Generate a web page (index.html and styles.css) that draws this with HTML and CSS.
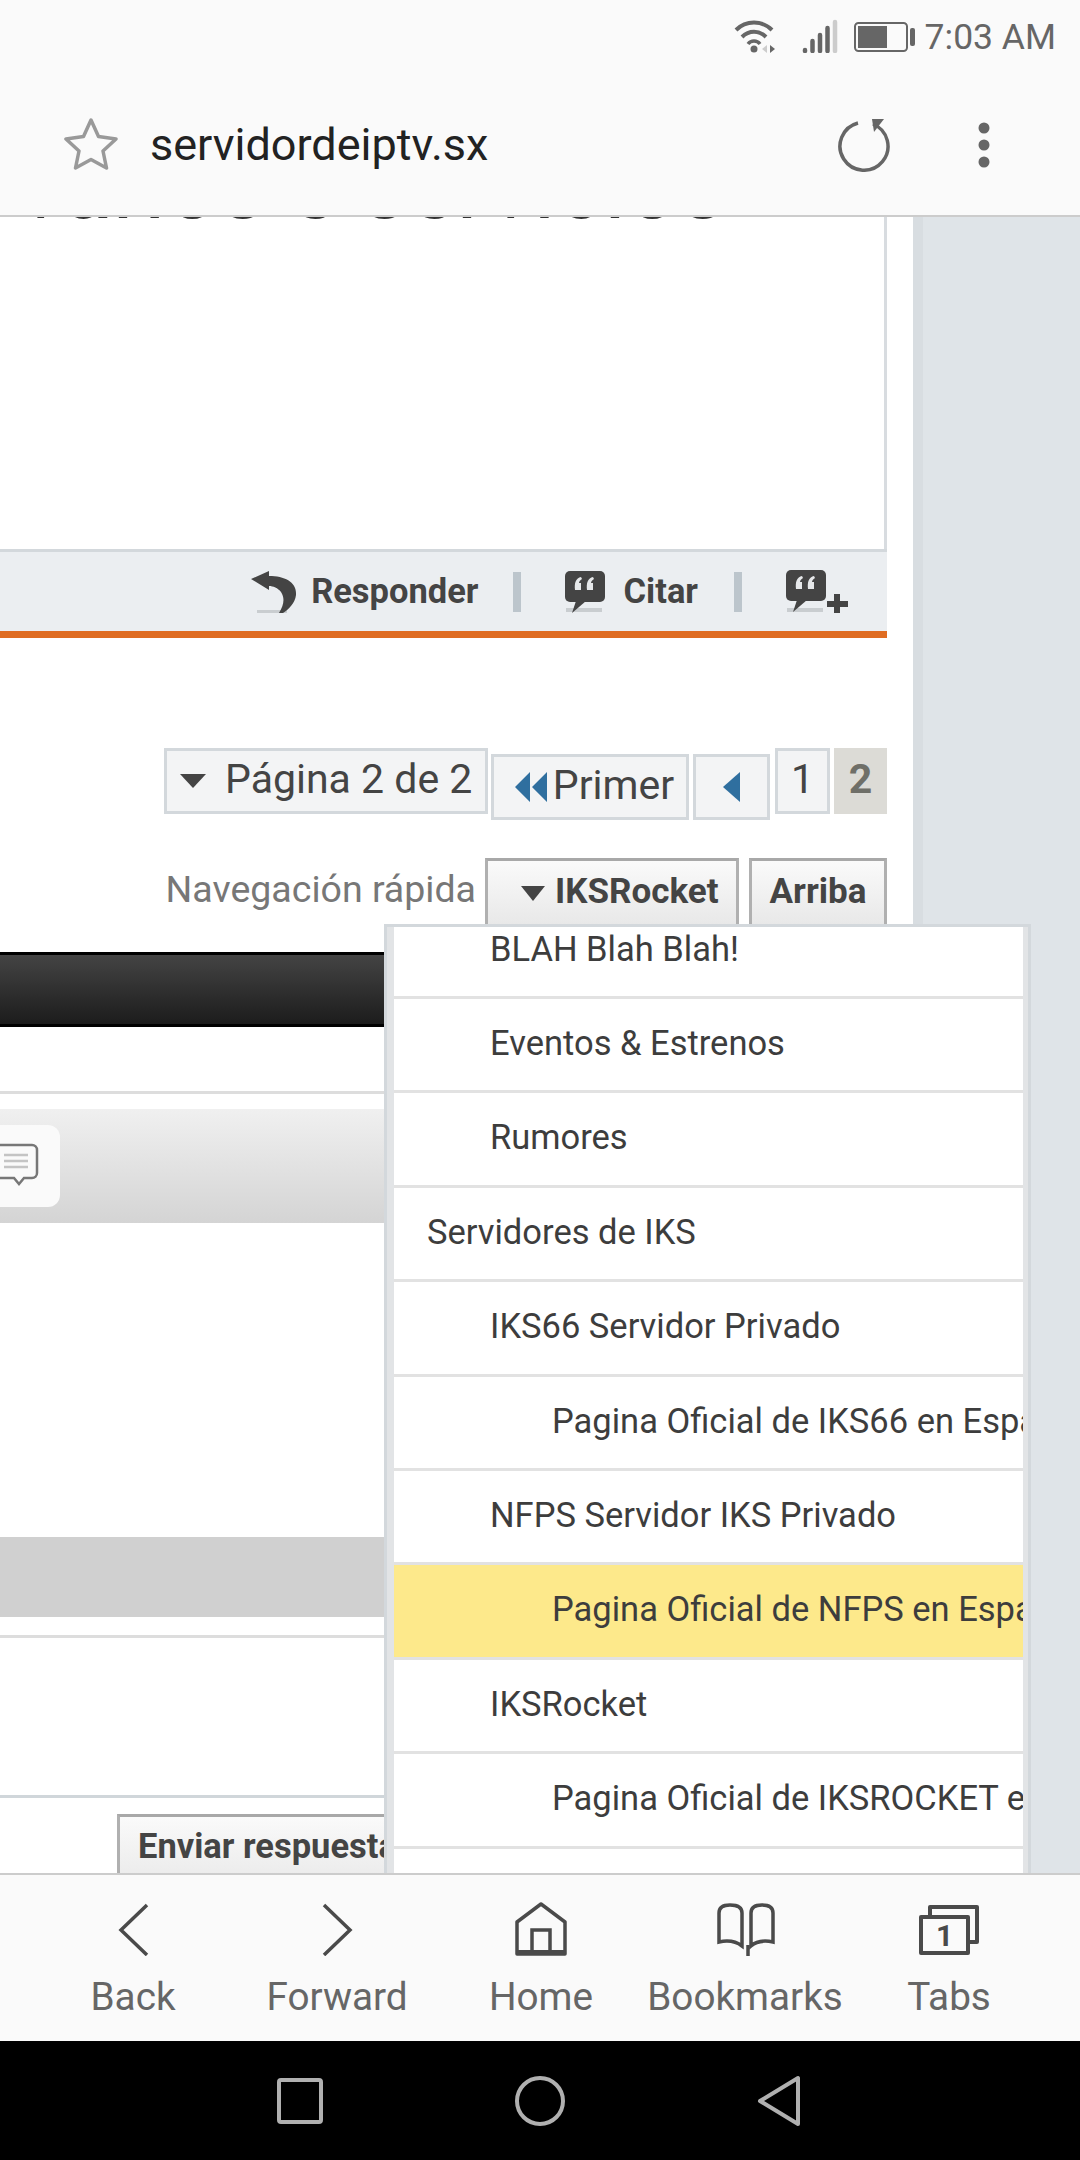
FILE: index.html
```html
<!DOCTYPE html>
<html lang="es">
<head>
<meta charset="utf-8">
<title>servidordeiptv.sx</title>
<link rel="stylesheet" href="styles.css">
</head>
<body>
<div class="app">
  <header class="chrome">
    <div class="status">
      <svg class="st-wifi" width="42" height="34" viewBox="0 0 42 34"><g fill="none" stroke="#666" stroke-width="4"><path d="M2 11C12 1 28 1 38 11"/><path d="M8 18C15 11 25 11 32 18"/></g><path d="M14 25C17 21 23 21 26 25" fill="none" stroke="#666" stroke-width="3.500"/><circle cx="20" cy="30" r="3.500" fill="#666"/><path d="M33 26l-5 4 5 4z" fill="#ccc"/><path d="M36 26l5 4-5 4z" fill="#666"/></svg>
      <svg class="st-signal" width="36" height="34" viewBox="0 0 36 34"><g fill="none" stroke-width="4.500" stroke-linecap="round"><path d="M3 31v1M10.500 22v10M18 16v16M25.500 9v23" stroke="#666"/><path d="M33 3v29" stroke="#ccc"/></g></svg>
      <svg class="st-batt" width="62" height="30" viewBox="0 0 62 30"><rect x="1" y="1" width="52" height="28" rx="3.500" fill="none" stroke="#666" stroke-width="2"/><rect x="4" y="4" width="29" height="22" fill="#666"/><rect x="56" y="6" width="5" height="18" rx="2" fill="#666"/></svg>
      <span class="st-time">7:03 AM</span>
    </div>
    <div class="urlbar">
      <svg class="star" width="54" height="54" viewBox="0 0 54 54"><path d="M27 3l7.500 16.500L52 22 39 34l3.500 17L27 42.500 11.500 51 15 34 2 22l17.500-2.500z" fill="none" stroke="#999" stroke-width="3.500" stroke-linejoin="round"/></svg>
      <span class="url">servidordeiptv.sx</span>
      <svg class="reload" width="54" height="54" viewBox="0 0 54 54"><path d="M20 5A24 24 0 1 0 35 6" fill="none" stroke="#666" stroke-width="3.500"/><path d="M34 1h12l-10 13z" fill="#666"/></svg>
      <svg class="dots" width="12" height="46" viewBox="0 0 12 46"><circle cx="6" cy="6" r="5.500" fill="#666"/><circle cx="6" cy="23" r="5.500" fill="#666"/><circle cx="6" cy="40" r="5.500" fill="#666"/></svg>
    </div>
  </header>

  <main class="viewport">
    <div class="page">
      <section class="card">
        <div class="post-title"><span>varios e servicios</span></div>
        <div class="postbar">
          <svg class="act-icon" width="46" height="42" viewBox="0 0 46 42"><path d="M6 39h30v3H6z" fill="#c9cdd0"/><path d="M0 8L18 0v5c16 0 28 6 27 19-1 8-7 14-13 18h-4c5-8 6-15 2-21-3-4-8-6-12-6v4z" fill="#444"/></svg>
          <span class="act-text">Responder</span>
          <i class="act-sep act-sep-first"></i>
          <svg class="act-icon" width="42" height="42" viewBox="0 0 42 42"><path d="M2 37h36v4H2z" fill="#c9cdd0"/><rect x="1" y="0" width="40" height="31" rx="5" fill="#444"/><path d="M12 30h10L8 42z" fill="#444"/><path d="M17 6c-5 1-7 6-6 13h6v-7h-2c0-1 1-3 3-4zM29 6c-5 1-7 6-6 13h6v-7h-2c0-1 1-3 3-4z" fill="#e6e8ea"/></svg>
          <span class="act-text act-citar">Citar</span>
          <i class="act-sep"></i>
          <svg class="act-icon" width="63" height="43" viewBox="0 0 63 43"><path d="M2 38h36v4H2z" fill="#c9cdd0"/><rect x="1" y="0" width="40" height="31" rx="5" fill="#444"/><path d="M12 30h10L8 42z" fill="#444"/><path d="M17 6c-5 1-7 6-6 13h6v-7h-2c0-1 1-3 3-4zM29 6c-5 1-7 6-6 13h6v-7h-2c0-1 1-3 3-4z" fill="#e6e8ea"/><path d="M49 24h6v7h8v6h-8v6h-6v-6h-7v-6h7z" fill="#444"/></svg>
        </div>
      </section>

      <nav class="pager">
        <div class="pg pg-main">
          <svg class="tri" width="26" height="14" viewBox="0 0 26 14"><path d="M0 0h26L13 14z" fill="#444"/></svg>
          <span>Página 2 de 2</span>
        </div>
        <div class="pg pg-low pg-first">
          <svg width="32" height="30" viewBox="0 0 32 30"><path d="M15 0v30L0 15zM32 0v30L17 15z" fill="#2f6f9f"/></svg>
          <span>Primer</span>
        </div>
        <div class="pg pg-low pg-prev">
          <svg width="17" height="30" viewBox="0 0 17 30"><path d="M17 0v30L0 15z" fill="#2f6f9f"/></svg>
        </div>
        <div class="pg pg-num">1</div>
        <div class="pg pg-num pg-cur">2</div>
      </nav>

      <div class="quicknav">
        <span class="qn-label">Navegación rápida</span>
        <button class="btn btn-forum" type="button">
          <svg class="tri" width="24" height="15" viewBox="0 0 24 15"><path d="M0 0h24L12 15z" fill="#444"/></svg>
          IKSRocket
        </button>
        <button class="btn btn-top" type="button">Arriba</button>
      </div>

      <div class="darkbar"></div>
      <div class="rule rule-a"></div>
      <div class="band">
        <div class="band-btn">
          <svg width="40" height="44" viewBox="0 0 40 44"><path d="M-6 2h38a5 5 0 0 1 5 5v23a5 5 0 0 1-5 5h-8l-5 6-5-6H-6z" fill="none" stroke="#777" stroke-width="2.500"/><path d="M4 12h24M4 18h24M4 24h24" stroke="#c4c4c4" stroke-width="2.500"/></svg>
        </div>
      </div>
      <div class="greyband"></div>
      <div class="rule rule-b"></div>
      <div class="rule rule-c"></div>
      <button class="btn btn-send" type="button">Enviar respuesta rápida</button>
    </div>

    <div class="popup">
      <ul class="menu">
        <li class="lv1">BLAH Blah Blah!</li>
        <li class="lv1">Eventos &amp; Estrenos</li>
        <li class="lv1">Rumores</li>
        <li class="lv0">Servidores de IKS</li>
        <li class="lv1">IKS66 Servidor Privado</li>
        <li class="lv2">Pagina Oficial de IKS66 en Español</li>
        <li class="lv1">NFPS Servidor IKS Privado</li>
        <li class="lv2 sel">Pagina Oficial de NFPS en Español</li>
        <li class="lv1">IKSRocket</li>
        <li class="lv2">Pagina Oficial de IKSROCKET en Español</li>
        <li class="lv1"></li>
      </ul>
    </div>
  </main>

  <footer class="toolbar">
    <div class="tool">
      <svg width="60" height="54" viewBox="0 0 60 54"><path d="M44 3L18 28l26 25" fill="none" stroke="#4a4a4a" stroke-width="3.500"/></svg>
      <span>Back</span>
    </div>
    <div class="tool">
      <svg width="60" height="54" viewBox="0 0 60 54"><path d="M17 3l26 25-26 25" fill="none" stroke="#4a4a4a" stroke-width="3.500"/></svg>
      <span>Forward</span>
    </div>
    <div class="tool">
      <svg width="60" height="54" viewBox="0 0 60 54"><path d="M6 20L30 2l24 18v32H6z" fill="none" stroke="#4a4a4a" stroke-width="3.500" stroke-linejoin="round"/><path d="M21 50V28h18v22" fill="none" stroke="#4a4a4a" stroke-width="3.500"/><path d="M6 50h48" stroke="#4a4a4a" stroke-width="4"/></svg>
      <span>Home</span>
    </div>
    <div class="tool">
      <svg width="60" height="54" viewBox="0 0 60 54"><g fill="none" stroke="#4a4a4a" stroke-width="3.500"><path d="M4 40V11Q4 3 15 3Q27 3 27 11V44Q18 37 4 40Z"/><path d="M36 11Q36 3 47 3Q58 3 58 11V40Q44 37 36 44Z"/><path d="M33 43v11"/></g></svg>
      <span>Bookmarks</span>
    </div>
    <div class="tool">
      <svg width="60" height="54" viewBox="0 0 60 54"><g fill="none" stroke="#4a4a4a" stroke-width="4" stroke-linejoin="round"><path d="M11 13V5h47v35H50"/><rect x="2" y="15" width="47" height="36"/></g><text class="tab-num" x="25.500" y="44" text-anchor="middle">1</text></svg>
      <span>Tabs</span>
    </div>
  </footer>

  <div class="navbar">
    <svg width="46" height="46" viewBox="0 0 46 46"><rect x="2" y="2" width="42" height="42" rx="2" fill="none" stroke="#b0b0b0" stroke-width="4"/></svg>
    <svg width="50" height="50" viewBox="0 0 50 50"><circle cx="25" cy="25" r="23" fill="none" stroke="#b0b0b0" stroke-width="4"/></svg>
    <svg width="44" height="52" viewBox="0 0 44 52"><path d="M41 3v46L3 26z" fill="none" stroke="#b0b0b0" stroke-width="4" stroke-linejoin="round"/></svg>
  </div>
</div>
</body>
</html>
```
FILE: styles.css
```css
* { box-sizing: border-box; }
html, body { margin: 0; padding: 0; }
body { font-family: Roboto, "Liberation Sans", sans-serif; color: #444; background: #fff; }
.app { width: 1080px; height: 2160px; display: flex; flex-direction: column; overflow: hidden; }

/* browser chrome */
.chrome { height: 217px; flex: none; background: #fafafa; border-bottom: 2px solid #ccc; }
.status { height: 70px; display: flex; align-items: flex-start; padding: 19px 24px 0 0; justify-content: flex-end; }
.st-wifi { margin-right: 26px; }
.st-signal { margin-right: 16px; }
.st-batt { margin: 3px 9px 0 0; }
.st-time { font-size: 35.500px; line-height: 36px; color: #666; margin-top: 0; }
.urlbar { height: 145px; display: flex; align-items: flex-start; padding: 47px 0 0 64px; position: relative; }
.url { font-size: 45px; line-height: 56px; color: #222; margin-left: 32px; flex: 1; }
.reload { margin: 1px 86px 0 0; }
.dots { margin: 5px 90px 0 0; }

/* page */
.viewport { flex: 1; min-height: 0; position: relative; overflow: hidden; background: #dfe4e8; }
.page { width: 923px; height: 100%; background: #fff; border-right: 10px solid #d8dde1; overflow: hidden; }
.card { width: 887px; height: 421px; border-right: 3px solid #d8dce0; display: flex; flex-direction: column; justify-content: space-between; }
.post-title { height: 4px; overflow: hidden; position: relative; }
.post-title span { position: absolute; right: 158px; bottom: -16px; line-height: 100px; height: 100px; font-size: 92px; color: #333; white-space: nowrap; }
.postbar { height: 89px; margin-right: -3px; background: #ebeef1; border-top: 3px solid #d3d8dc; border-bottom: 7px solid #df6c22; display: flex; align-items: center; justify-content: flex-end; padding-right: 39px; }
.act-text { font-size: 34.500px; line-height: 40px; font-weight: 700; color: #444; margin: -2px 0 0 14px; }
.act-citar { margin-left: 18px; }
.act-sep { width: 8px; height: 40px; background: #bcc5cc; margin: 0 43px 0 36px; }
.act-sep-first { margin-left: 34px; }

.pager { width: 887px; margin-top: 110px; display: flex; justify-content: flex-end; align-items: flex-start; font-size: 41px; color: #444; }
.pg { height: 66px; background: #f3f4f5; border: 3px solid #d3d8dc; display: flex; align-items: center; justify-content: center; margin-left: 4px; padding-bottom: 5px; }
.pg-main { width: 324px; margin-left: 0; justify-content: flex-start; padding-left: 13px; margin-right: 3px; }
.pg-main .tri { margin-right: 19px; margin-top: 5px; }
.pg-low { margin-top: 6px; }
.pg-first { width: 198px; margin-left: 0; padding-left: 9px; }
.pg-first svg { margin-right: 6px; margin-top: 5px; }
.pg-prev { width: 77px; }
.pg-prev svg { margin-top: 5px; }
.pg-num { width: 55px; margin-left: 5px; }
.pg-cur { width: 53px; margin-left: 4px; background: #dcdbd6; border-color: #dcdbd6; font-weight: 700; color: #6f6f68; }

.quicknav { width: 887px; margin-top: 38px; display: flex; justify-content: flex-end; align-items: flex-start; }
.qn-label { font-size: 37.500px; line-height: 62px; color: #777; margin-right: 9px; }
.btn { font: 700 35px Roboto, "Liberation Sans", sans-serif; color: #444; background: linear-gradient(#fafafa, #e8e8e8); border: 3px solid #b0b0b0; border-top-color: #a8a8a8; display: flex; align-items: center; padding: 0 0 4px; }
.btn-forum { width: 254px; height: 70px; justify-content: flex-start; gap: 10px; padding-left: 33px; }
.btn-forum .tri { margin-top: 4px; }
.btn-top { width: 138px; height: 70px; margin-left: 10px; justify-content: center; }

.darkbar { width: 887px; height: 75px; margin-top: 24px; border-top: 3px solid #000; border-bottom: 3px solid #000; background: linear-gradient(#444, #1c1c1c); }
.rule { width: 887px; height: 3px; background: #ddd; }
.rule-a { margin-top: 64px; }
.band { width: 887px; height: 114px; margin-top: 15px; padding-top: 16px; background: linear-gradient(#f0f0f0, #d4d4d4); }
.band-btn { width: 60px; height: 82px; background: #fafafa; border-radius: 0 12px 12px 0; padding-top: 18px; }
.band-btn svg { display: block; }
.greyband { width: 887px; height: 80px; margin-top: 314px; background: #d0d0d0; }
.rule-b { margin-top: 18px; }
.rule-c { margin-top: 157px; background: #d0d6da; }
.btn-send { width: 400px; height: 80px; margin: 16px 0 0 117px; padding: 0 0 16px 18px; white-space: nowrap; justify-content: flex-start; font-size: 34.500px; }

/* dropdown overlay */
.popup { position: absolute; left: 384px; top: 707px; width: 647px; bottom: 0; border: 3px solid #d3d8dc; border-bottom: 0; overflow: hidden; background: #fff; }
.menu { list-style: none; margin: -22.4px 0 0; padding: 0; border-left: 7px solid #e2e4e6; border-right: 5px solid #e2e4e6; }
.menu li { height: 94.4px; border-bottom: 3px solid #e2e2e2; font-size: 34.500px; line-height: 89.500px; color: #3d3d3d; white-space: nowrap; overflow: hidden; }
.lv0 { padding-left: 33px; }
.lv1 { padding-left: 96px; }
.lv2 { padding-left: 158px; }
.menu .sel { background: #fde98b; }

/* toolbar */
.toolbar { height: 168px; flex: none; background: #fafafa; border-top: 2px solid #ccc; display: grid; grid-template-columns: repeat(5, 204px); padding: 27px 0 0 31px; }
.tool { display: flex; flex-direction: column; align-items: center; gap: 19px; font-size: 38.700px; line-height: 44px; color: #666; }
.tool svg { display: block; }
.tab-num { font: 700 30px Roboto, sans-serif; fill: #4a4a4a; }

.navbar { height: 119px; flex: none; background: #000; display: flex; align-items: center; padding-left: 277px; }
.navbar svg:nth-child(1) { margin-right: 192px; }
.navbar svg:nth-child(2) { margin-right: 192px; }
```
